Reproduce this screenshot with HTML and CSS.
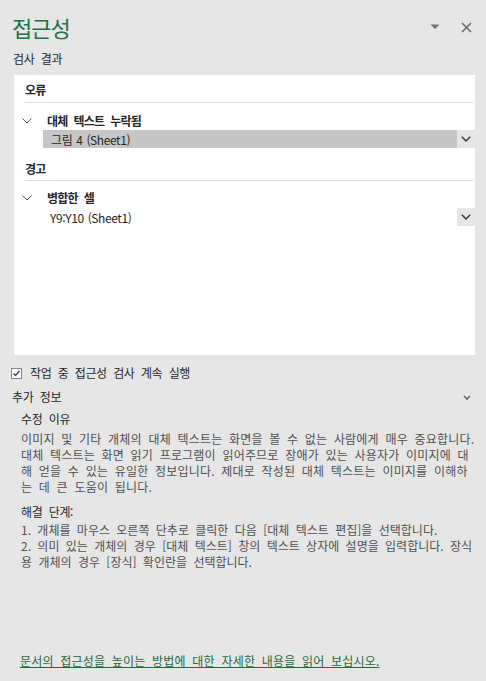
FILE: index.html
```html
<!DOCTYPE html>
<html lang="ko">
<head>
    <meta charset="UTF-8">
    <meta name="viewport" content="width=device-width, initial-scale=1.0">
    <title>접근성</title>
    <link rel="stylesheet" href="styles.css">
</head>
<body>

    <div class="pane">
        <!-- Header -->
        <div class="pane-header">
            <h1 class="pane-title">접근성</h1>
            <div class="pane-tools">
                <button class="tool-btn" aria-label="작업 창 옵션">
                    <svg width="10" height="6" viewBox="0 0 10 6"><path d="M0.5 0.5h9L5 5z" fill="#737373"/></svg>
                </button>
                <button class="tool-btn" aria-label="닫기">
                    <svg width="11" height="11" viewBox="0 0 11 11"><path d="M1 1l9 9M10 1l-9 9" stroke="#6b6b6b" stroke-width="1.6" fill="none"/></svg>
                </button>
            </div>
        </div>

        <div class="section-label">검사 결과</div>

        <!-- Inspection results -->
        <div class="results">
            <div class="result-group">
                <div class="group-title">오류</div>
                <div class="issue">
                    <div class="issue-title">
                        <svg class="twisty" width="10" height="6" viewBox="0 0 10 6"><path d="M0.5 0.5L5 5l4.5-4.5" stroke="#555" stroke-width="1" fill="none"/></svg>
                        대체 텍스트 누락됨
                    </div>
                    <div class="issue-item selected">
                        <span>그림 4 (Sheet1)</span>
                        <button class="item-menu" aria-label="메뉴">
                            <svg width="10" height="6" viewBox="0 0 10 6"><path d="M0.8 0.8L5 5l4.2-4.2" stroke="#333" stroke-width="1.4" fill="none"/></svg>
                        </button>
                    </div>
                </div>
            </div>

            <div class="result-group">
                <div class="group-title">경고</div>
                <div class="issue">
                    <div class="issue-title">
                        <svg class="twisty" width="10" height="6" viewBox="0 0 10 6"><path d="M0.5 0.5L5 5l4.5-4.5" stroke="#555" stroke-width="1" fill="none"/></svg>
                        병합한 셀
                    </div>
                    <div class="issue-item">
                        <span>Y9:Y10 (Sheet1)</span>
                        <button class="item-menu" aria-label="메뉴">
                            <svg width="10" height="6" viewBox="0 0 10 6"><path d="M0.8 0.8L5 5l4.2-4.2" stroke="#333" stroke-width="1.4" fill="none"/></svg>
                        </button>
                    </div>
                </div>
            </div>
        </div>

        <label class="keep-running">
            <span class="check">
                <svg width="9" height="9" viewBox="0 0 9 9"><path d="M1.5 4.5l2 2L7.5 2" stroke="#333" stroke-width="1.2" fill="none"/></svg>
            </span>
            작업 중 접근성 검사 계속 실행
        </label>

        <!-- Additional info -->
        <div class="info-head">
            <span>추가 정보</span>
            <svg width="8" height="5" viewBox="0 0 8 5"><path d="M1 1l3 3 3-3" stroke="#666" stroke-width="1.6" fill="none"/></svg>
        </div>

        <div class="info">
            <h3>수정 이유</h3>
            <p>이미지 및 기타 개체의 대체 텍스트는 화면을 볼 수 없는 사람에게 매우 중요합니다. 대체 텍스트는 화면 읽기 프로그램이 읽어주므로 장애가 있는 사용자가 이미지에 대해 얻을 수 있는 유일한 정보입니다. 제대로 작성된 대체 텍스트는 이미지를 이해하는 데 큰 도움이 됩니다.</p>

            <h3 class="steps-title">해결 단계:</h3>
            <p class="steps">1. 개체를 마우스 오른쪽 단추로 클릭한 다음 [대체 텍스트 편집]을 선택합니다.<br>2. 의미 있는 개체의 경우 [대체 텍스트] 창의 텍스트 상자에 설명을 입력합니다. 장식용 개체의 경우 [장식] 확인란을 선택합니다.</p>
        </div>

        <a class="help-link" href="#">문서의 접근성을 높이는 방법에 대한 자세한 내용을 읽어 보십시오.</a>
    </div>

</body>
</html>
```

FILE: styles.css
```css
body {
    margin: 0;
    padding: 0;
    background: #e6e6e6;
    color: #262626;
    font-family: 'Noto Sans CJK KR', 'Noto Sans', sans-serif;
    font-size: 12px;
    letter-spacing: -0.4px;
    word-spacing: 3.5px;
}

.pane {
    display: flex;
    flex-direction: column;
    height: 681px;
    box-sizing: border-box;
}

/* header */
.pane-header {
    display: flex;
    align-items: center;
    justify-content: space-between;
    padding: 12px 0 0 12px;
}

.pane-title {
    margin: 0;
    font-size: 22px;
    line-height: 30px;
    font-weight: 400;
    color: #217346;
    letter-spacing: -1px;
}

.pane-tools {
    display: flex;
    align-items: center;
    gap: 19px;
    margin-right: 13px;
}

.tool-btn {
    display: flex;
    align-items: center;
    justify-content: center;
    width: 13px;
    height: 13px;
    padding: 0;
    border: none;
    background: none;
}

.section-label {
    margin: 8px 0 0 13px;
    line-height: 18px;
}

/* results box */
.results {
    height: 280px;
    margin: 7px 11px 0 14px;
    padding: 6px 0 0 11px;
    background: white;
    box-sizing: border-box;
}

.group-title {
    line-height: 18px;
    font-weight: 700;
    letter-spacing: -0.8px;
    padding-bottom: 3px;
    border-bottom: 1px solid #e1e1e1;
    margin-right: 1px;
}

.result-group + .result-group {
    margin-top: 12px;
}

.result-group + .result-group .group-title {
    padding-bottom: 2px;
}

.issue {
    padding-top: 9px;
}

.result-group + .result-group .issue {
    padding-top: 8px;
}

.issue-title {
    display: flex;
    align-items: center;
    line-height: 18px;
    font-weight: 700;
    letter-spacing: -0.8px;
}

.twisty {
    margin: 0 15px 0 -3px;
}

.issue-item {
    display: flex;
    align-items: center;
    justify-content: space-between;
    height: 18px;
    margin-left: 18px;
    padding-left: 8px;
    color: #262626;
    word-spacing: 1px;
}

.issue-item.selected {
    background: #c6c6c6;
}

.result-group + .result-group .issue-item {
    margin-top: 1px;
    padding-left: 7px;
}

.item-menu {
    display: flex;
    align-items: center;
    justify-content: center;
    width: 18px;
    height: 18px;
    padding: 0;
    border: none;
    background: #e6e6e6;
}

/* options */
.keep-running {
    display: flex;
    align-items: center;
    margin: 9px 0 0 11px;
    line-height: 18px;
}

.check {
    display: flex;
    align-items: center;
    justify-content: center;
    width: 9px;
    height: 9px;
    margin-right: 8px;
    border: 1px solid #8a8a8a;
    background: white;
}

.info-head {
    display: flex;
    align-items: center;
    justify-content: space-between;
    margin: 6px 15px 0 12px;
    line-height: 18px;
}

.info {
    padding: 4px 10px 0 21px;
}

.info h3 {
    margin: 0;
    font-size: 12px;
    font-weight: 400;
    line-height: 18px;
    color: #262626;
}

.info p {
    margin: 3px 0 0;
    line-height: 16px;
    color: #505050;
    letter-spacing: 0.2px;
    word-spacing: 3px;
}

.info .steps-title {
    margin-top: 8px;
}

.info p.steps {
    margin-top: 1px;
    letter-spacing: 0;
}

.help-link {
    margin: auto 0 0 20px;
    padding-bottom: 11px;
    line-height: 18px;
    color: #1e6b3a;
    letter-spacing: 0.2px;
    word-spacing: 3px;
}
```
